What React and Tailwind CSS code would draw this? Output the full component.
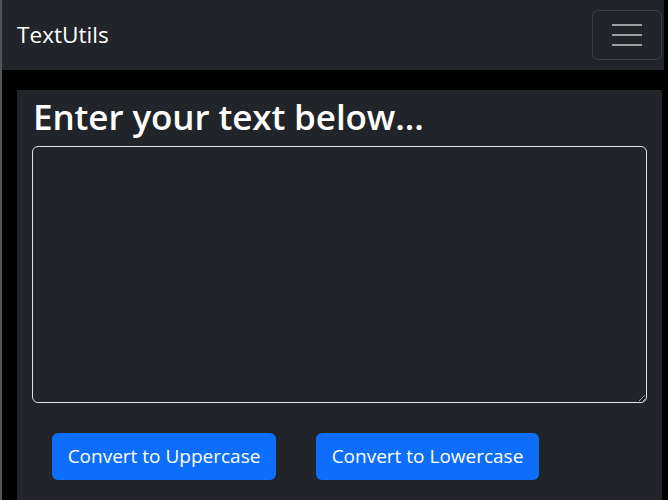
export default function App() {
  const font = { fontFamily: '"Open Sans", "Noto Sans", "Liberation Sans", sans-serif' };
  return (
    <div className="min-h-[500px] h-[500px] overflow-hidden bg-black border-l-2 border-[#555555]" style={font}>
      <nav className="h-[70px] mr-[4px] bg-[#212529] flex items-center justify-between pl-[15px] pr-[2px]">
        <span className="text-white text-[22.6px]">TextUtils</span>
        <button className="w-[70px] h-[50px] rounded-[6px] border border-[#3b3e42] flex flex-col items-center justify-center gap-[8px]">
          <span className="block w-[30px] h-[2px] bg-[#9c9ea0]"></span>
          <span className="block w-[30px] h-[2px] bg-[#9c9ea0]"></span>
          <span className="block w-[30px] h-[2px] bg-[#9c9ea0]"></span>
        </button>
      </nav>
      <div className="mt-[20px] ml-[15px] w-[645px] h-[410px] bg-[#212529] px-[15px] pt-[6px]">
        <h1 className="text-white text-[35px] font-semibold leading-[1.2] mb-[8px] ml-[1px] tracking-[-0.1px]">Enter your text below...</h1>
        <textarea className="block w-[615px] h-[257px] rounded-[6px] border border-[#dee2e6] bg-[#212529] text-white outline-none"></textarea>
        <div className="flex mt-[30px]">
          <button className="mx-[20px] h-[47px] w-[224px] rounded-[6px] bg-[#0d6efd] text-white text-[19px]">Convert to Uppercase</button>
          <button className="mx-[20px] h-[47px] w-[223px] rounded-[6px] bg-[#0d6efd] text-white text-[19px]">Convert to Lowercase</button>
        </div>
      </div>
    </div>
  );
}
